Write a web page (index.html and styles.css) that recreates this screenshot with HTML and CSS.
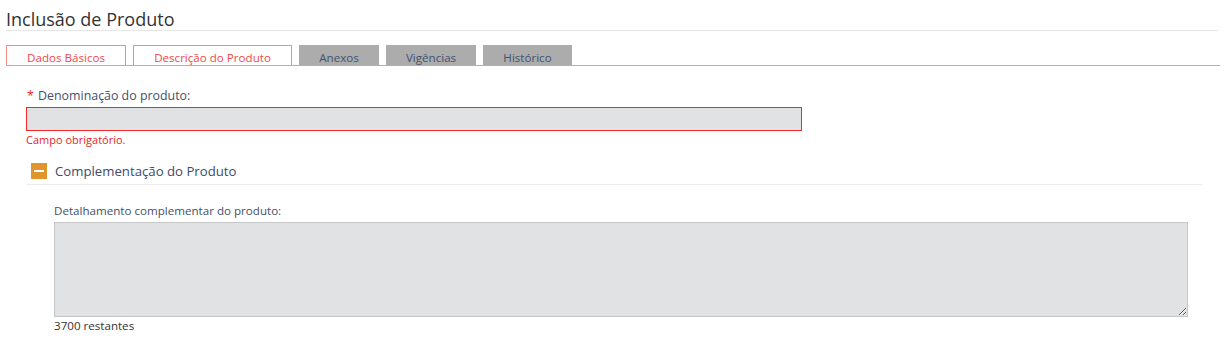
FILE: index.html
```html
<!DOCTYPE html>
<html lang="pt-BR">
<head>
    <meta charset="UTF-8">
    <title>Inclusão de Produto</title>
    <link rel="stylesheet" href="styles.css">
</head>
<body>
<div id="page">
    <h2 class="page-title">Inclusão de Produto</h2>

    <ul class="tabs">
        <li class="tab active">Dados Básicos</li>
        <li class="tab active">Descrição do Produto</li>
        <li class="tab">Anexos</li>
        <li class="tab">Vigências</li>
        <li class="tab">Histórico</li>
    </ul>

    <div class="tab-content">
        <div class="field">
            <label for="denominacao"><span class="req">*</span> Denominação do produto:</label>
            <input type="text" id="denominacao" class="input error">
            <div class="error-msg">Campo obrigatório.</div>
        </div>

        <div class="section">
            <div class="section-head">
                <span class="toggle"><span class="minus"></span></span>
                <span class="section-title">Complementação do Produto</span>
            </div>
            <div class="section-body">
                <label for="detalhamento">Detalhamento complementar do produto:</label>
                <textarea id="detalhamento" class="textarea"></textarea>
                <div class="counter">3700 restantes</div>
            </div>
        </div>
    </div>
</div>
</body>
</html>
```

FILE: styles.css
```css
body {
    margin: 0;
    font-family: "Open Sans", "Liberation Sans", sans-serif;
    font-size: 12px;
    color: #333;
    background: #fff;
}

#page {
    padding: 8px 4px 0 6px;
}

.page-title {
    margin: 0 2px 0 0;
    font-size: 18px;
    font-weight: normal;
    line-height: 22px;
    color: #333;
    border-bottom: 1px solid #e6e6e6;
}

.tabs {
    list-style: none;
    margin: 14px 0 0 0;
    padding: 0;
    display: flex;
    gap: 7px;
    border-bottom: 1px solid #b0b0b0;
}

.tab {
    box-sizing: border-box;
    height: 20px;
    line-height: 23px;
    padding: 0;
    font-size: 11.6px;
    white-space: nowrap;
    background: #acacac;
    color: #3f5275;
    border: 1px solid #acacac;
    border-bottom: none;
    text-align: center;
}

.tab:nth-child(1) { width: 120px; }
.tab:nth-child(2) { width: 159px; }
.tab:nth-child(3) { width: 80px; }
.tab:nth-child(4) { width: 90px; }
.tab:nth-child(5) { width: 89px; }

.tab.active {
    background: #fff;
    color: #f04848;
    border-color: #f58a8a;
}

.tab-content {
    padding: 21px 0 0 20px;
}

.field label {
    display: block;
    color: #44506a;
    font-size: 12.4px;
    line-height: 18px;
    margin-bottom: 2px;
}

.req {
    color: #e8242a;
    margin-left: 1px;
    margin-right: 1px;
}

.input {
    display: block;
    box-sizing: border-box;
    width: 776px;
    height: 24px;
    margin: 0;
    background: #e1e2e4;
    border: 1px solid #ccc;
}

.input.error {
    border-color: #f22828;
}

.error-msg {
    color: #e8242a;
    font-size: 11px;
    line-height: 16px;
    margin-top: 1px;
}

.section {
    margin-top: 14px;
}

.section-head {
    display: flex;
    align-items: center;
    margin-left: 1px;
    margin-right: 18px;
    padding-bottom: 4px;
    border-bottom: 1px solid #ececec;
}

.toggle {
    width: 16px;
    height: 16px;
    margin-left: 4px;
    background: #e0962c;
    display: flex;
    align-items: center;
    justify-content: center;
}

.minus {
    width: 10px;
    height: 2px;
    background: #fff;
}

.section-title {
    margin-left: 8px;
    font-size: 13.2px;
    color: #3e4b68;
    line-height: 18px;
}

.section-body {
    padding: 17px 0 0 28px;
}

.section-body label {
    display: block;
    color: #44506a;
    font-size: 11.6px;
    line-height: 18px;
    margin-bottom: 2px;
}

.textarea {
    display: block;
    box-sizing: border-box;
    width: 1134px;
    height: 95px;
    margin: 0;
    background: #e1e2e4;
    border: 1px solid #c6c6c6;
}

.counter {
    color: #333;
    font-size: 11.6px;
    line-height: 16px;
    margin-top: 1px;
}
```
